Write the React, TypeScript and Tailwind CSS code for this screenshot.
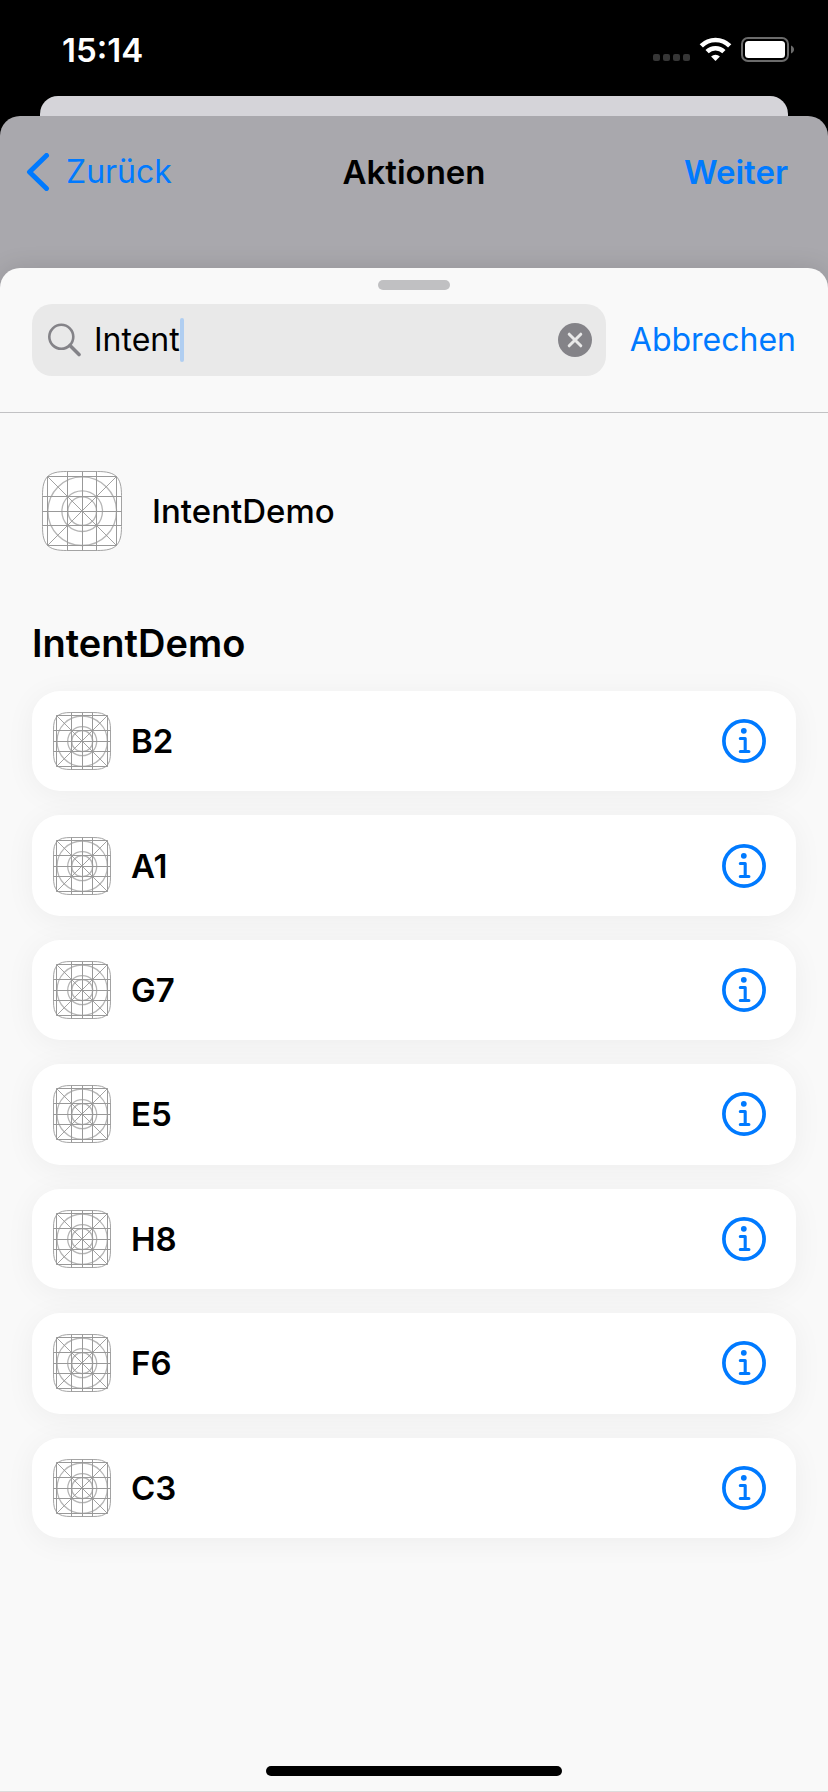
import { useState } from "react";

const ACTIONS = ["B2", "A1", "G7", "E5", "H8", "F6", "C3"];

type GridIconProps = {
  size: number;
  lines: number[];
  radii: number[];
  className: string;
};

function GridIcon({ size, lines, radii, className }: GridIconProps) {
  const lo = 0.5;
  const hi = size - 0.5;
  const c = size / 2 + 0.2;
  const s = size * 0.3;
  const k = size * 0.07;
  const outline = [
    `M${lo + s} ${lo}H${hi - s}`,
    `C${hi - k} ${lo} ${hi} ${lo + k} ${hi} ${lo + s}`,
    `V${hi - s}`,
    `C${hi} ${hi - k} ${hi - k} ${hi} ${hi - s} ${hi}`,
    `H${lo + s}`,
    `C${lo + k} ${hi} ${lo} ${hi - k} ${lo} ${hi - s}`,
    `V${lo + s}`,
    `C${lo} ${lo + k} ${lo + k} ${lo} ${lo + s} ${lo}Z`,
  ].join("");
  const first = lines[0];
  const last = lines[lines.length - 1];
  return (
    <svg viewBox={`0 0 ${size} ${size}`} className={className} fill="none" aria-hidden="true">
      <path d={outline} fill="#fff" stroke="#a3a3a3" />
      {radii.map((r) => (
        <circle key={r} cx={c} cy={c} r={r} stroke="#b5b5b5" strokeWidth="1.3" />
      ))}
      {lines.map((p) => {
        const edge = p === first || p === last;
        const from = edge ? first : lo;
        const to = edge ? last : hi;
        return <path key={p} d={`M${p} ${from}V${to}M${from} ${p}H${to}`} stroke="#999" />;
      })}
      <path d={`M${first} ${first}L${last} ${last}M${last} ${first}L${first} ${last}`} stroke="#999" strokeWidth=".9" />
    </svg>
  );
}

function AppIcon() {
  return (
    <GridIcon
      size={80}
      lines={[5.5, 25.5, 40.5, 54.5, 74.5]}
      radii={[34.3, 20.3, 14.3]}
      className="size-20 shrink-0"
    />
  );
}

function ActionIcon() {
  return (
    <GridIcon
      size={58}
      lines={[3.5, 18.5, 29.5, 39.5, 54.5]}
      radii={[25.2, 14.5, 10.5]}
      className="size-[58px] shrink-0"
    />
  );
}

function StatusBar() {
  return (
    <div className="flex h-24 items-center justify-between pt-1 pr-[34px] pl-[62px] text-white">
      <span className="text-[33px] leading-10 font-semibold">15:14</span>
      <svg viewBox="0 0 141 26" className="h-[26px] w-[141px]" aria-hidden="true">
        <g fill="#363636">
          <rect x="0" y="17" width="7" height="7" rx="2" />
          <rect x="10" y="17" width="7" height="7" rx="2" />
          <rect x="20" y="17" width="7" height="7" rx="2" />
          <rect x="30" y="17" width="7" height="7" rx="2" />
        </g>
        <g fill="none" stroke="#fff" strokeWidth="4.6">
          <path d="M48.300 8.900a20 20 0 0 1 28.400 0" />
          <path d="M54.100 14.700a12 12 0 0 1 16.800 0" />
        </g>
        <path d="M62.500 24l-4.400-4.500a6.400 6.400 0 0 1 8.800 0z" fill="#fff" />
        <rect x="89" y="1" width="46" height="23" rx="6" fill="none" stroke="#6b6b6b" strokeWidth="2" />
        <rect x="92" y="4" width="40" height="17" rx="3.500" fill="#fff" />
        <path d="M138 8.500c4 1.500 4 6.500 0 8z" fill="#6b6b6b" />
      </svg>
    </div>
  );
}

function InfoIcon() {
  return (
    <svg viewBox="0 0 44 44" className="size-11" fill="none" stroke="#007aff" aria-hidden="true">
      <circle cx="22" cy="22" r="20.100" strokeWidth="3.700" />
      <circle cx="21.800" cy="11.800" r="2.900" fill="#007aff" stroke="none" />
      <path d="M18.300 19.500h4.900v13M18.300 32.500h8.600" strokeWidth="3.100" strokeLinecap="round" strokeLinejoin="round" />
    </svg>
  );
}

function ActionRow({ name }: { name: string }) {
  return (
    <li className="flex items-center rounded-[28px] bg-white pr-[30px] pl-[21px] shadow-[0_4px_30px_rgba(0,0,0,0.05)]">
      <ActionIcon />
      <span className="ml-5 flex-1 text-[33px] leading-10 font-semibold">{name}</span>
      <button type="button" aria-label={`Info ${name}`}>
        <InfoIcon />
      </button>
    </li>
  );
}

export default function App() {
  const [query, setQuery] = useState("Intent");

  return (
    <div className="flex min-h-screen flex-col bg-black font-['Inter',sans-serif] text-black">
      <StatusBar />
      <div className="mx-10 h-5 rounded-t-[18px] bg-[#d5d4d9]" />
      <div className="flex flex-1 flex-col overflow-hidden rounded-t-[20px] bg-[#a9a8ad]">
        <header className="mb-10 flex h-28 items-center pr-10 pl-[26px] text-[33px] leading-10">
          <div className="flex flex-1 pr-3.5">
            <button type="button" className="flex items-center gap-4 text-[32px] text-[#007aff]">
              <svg viewBox="0 0 24 38" className="h-[38px] w-6" fill="none" aria-hidden="true">
                <path d="M20.500 2.500L3.500 19l17 16.500" stroke="currentColor" strokeWidth="5" strokeLinecap="round" strokeLinejoin="round" />
              </svg>
              Zurück
            </button>
          </div>
          <h1 className="font-semibold">Aktionen</h1>
          <div className="flex flex-1 justify-end">
            <button type="button" className="font-semibold text-[#007aff]">
              Weiter
            </button>
          </div>
        </header>

        <main className="flex flex-1 flex-col rounded-t-[20px] border-b border-[#dcdcdc] bg-[#f9f9f9] pt-3 shadow-[0_0_24px_rgba(0,0,0,0.12)]">
          <div className="h-2.5 w-[72px] self-center rounded-full bg-[#c0c0c2]" />
          <div className="flex items-center gap-6 border-b border-[#c2c2c4] px-8 pt-3.5 pb-9">
            <div className="flex h-[72px] flex-1 items-center rounded-[20px] bg-[#e9e9e9] pr-3.5 pl-4">
              <svg viewBox="0 0 34 34" className="size-[34px] shrink-0" fill="none" stroke="#848388" aria-hidden="true">
                <circle cx="13.300" cy="13.800" r="12" strokeWidth="2.600" />
                <path d="M22 22.500l9 9" strokeWidth="3.600" strokeLinecap="round" />
              </svg>
              <input
                type="text"
                aria-label="Suchen"
                value={query}
                onChange={(e) => setQuery(e.target.value)}
                className="ml-3 field-sizing-content min-w-1 bg-transparent text-[32px] leading-10 caret-transparent outline-none"
              />
              <span className="h-11 w-1 rounded-sm bg-[#b0cef1]" />
              <button type="button" aria-label="Text löschen" onClick={() => setQuery("")} className="ml-auto">
                <svg viewBox="0 0 34 34" className="size-[34px]" aria-hidden="true">
                  <circle cx="17" cy="17" r="17" fill="#848388" />
                  <path d="M11.200 11.200l11.600 11.600M22.800 11.200L11.200 22.800" stroke="#e9e9e9" strokeWidth="3" strokeLinecap="round" />
                </svg>
              </button>
            </div>
            <button type="button" className="text-[32px] leading-10 text-[#007aff]">
              Abbrechen
            </button>
          </div>

          <div className="flex items-center gap-[30px] px-[42px] pt-[58px]">
            <AppIcon />
            <span className="text-[33px] leading-10 font-medium">IntentDemo</span>
          </div>

          <section className="px-8 pt-[68px]">
            <h2 className="text-[38px] leading-12 font-semibold">IntentDemo</h2>
            <ul className="mt-6 grid min-h-[847px] auto-rows-fr gap-6">
              {ACTIONS.map((name) => (
                <ActionRow key={name} name={name} />
              ))}
            </ul>
          </section>

          <div className="mt-auto mb-[15px] h-2.5 w-[296px] self-center rounded-full bg-black" />
        </main>
      </div>
    </div>
  );
}
